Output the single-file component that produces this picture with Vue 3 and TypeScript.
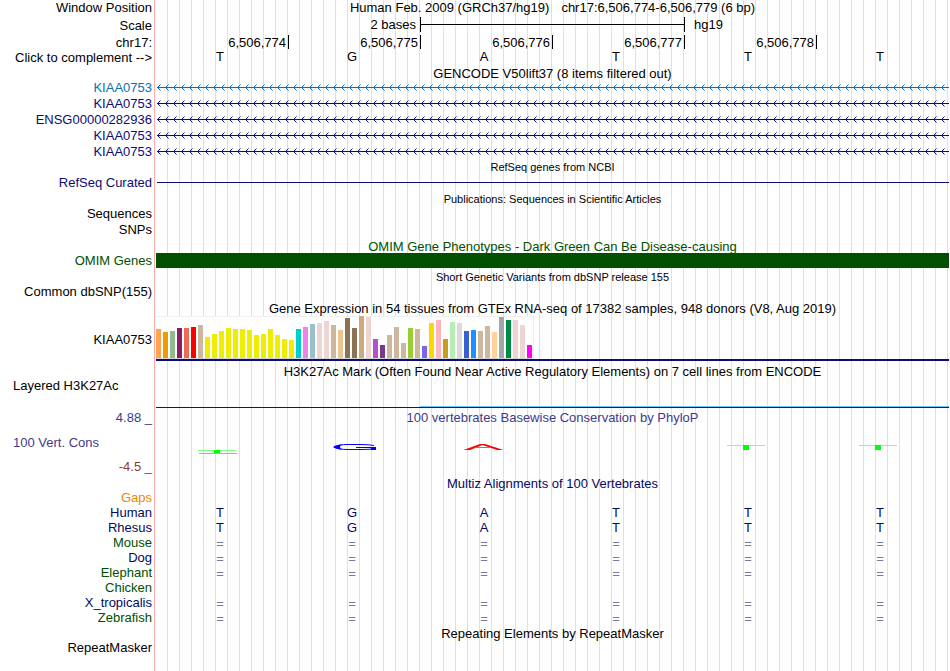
<script setup lang="ts">
import { computed, ref } from 'vue'

interface Bar { color: string; height: number }
interface Species { name: string; tone: string; marks: string }

const complemented = ref(false)
const pairs: Record<string, string> = { A: 'T', T: 'A', G: 'C', C: 'G' }
const sequence = ['T', 'G', 'A', 'T', 'T', 'T']
const bases = computed(() =>
  complemented.value ? sequence.map((b) => pairs[b]) : sequence,
)

const ticks = ['6,506,774', '6,506,775', '6,506,776', '6,506,777', '6,506,778', '']

const genes = [
  { name: 'KIAA0753', tone: 'blue' },
  { name: 'KIAA0753', tone: 'navy' },
  { name: 'ENSG00000282936', tone: 'navy' },
  { name: 'KIAA0753', tone: 'navy' },
  { name: 'KIAA0753', tone: 'navy' },
]

const expression: Bar[] = (
  'ffa54f:29 ee9a00:26 8fbc8f:27 8b1c62:30 ee6a50:30 ff0000:31 cdb79e:33 ' +
  'eeee00:21 eeee00:24 eeee00:27 eeee00:30 eeee00:29 eeee00:29 eeee00:28 ' +
  'eeee00:23 eeee00:24 eeee00:29 eeee00:23 eeee00:19 eeee00:18 00cdcd:29 ' +
  'ee82ee:31 9ac0cd:34 eed5d2:35 eed5d2:37 cdb79e:33 eec591:28 8b7355:40 ' +
  '8b7355:30 cdaa7d:42 eed5d2:41 b452cd:19 7a378b:13 cdb79e:23 cdb79e:31 ' +
  'cdb79e:15 9acd32:30 cdb79e:29 7a67ee:12 ffd700:35 ffb6c1:38 cd9b1d:19 ' +
  'b4eeb4:36 d9d9d9:35 3a5fcd:27 1e90ff:28 cdb79e:27 cdb79e:32 ffd39b:26 ' +
  'a6a6a6:41 008b45:38 eed5d2:38 eed5d2:33 ff00ff:13'
).split(' ').map((item) => {
  const [hex, height] = item.split(':')
  return { color: '#' + hex, height: Number(height) }
})

const species: Species[] = [
  { name: 'Gaps', tone: 'orange', marks: '' },
  { name: 'Human', tone: 'ink', marks: 'TGATTT' },
  { name: 'Rhesus', tone: 'ink', marks: 'TGATTT' },
  { name: 'Mouse', tone: 'green', marks: '======' },
  { name: 'Dog', tone: 'ink', marks: '======' },
  { name: 'Elephant', tone: 'green', marks: '======' },
  { name: 'Chicken', tone: 'green', marks: '' },
  { name: 'X_tropicalis', tone: 'ink', marks: '======' },
  { name: 'Zebrafish', tone: 'green', marks: '======' },
]
</script>

<template>
  <main class="browser">
    <div class="row">
      <div class="label">Window Position</div>
      <div class="title position">
        <span>Human Feb. 2009 (GRCh37/hg19)</span>
        <span>chr17:6,506,774-6,506,779 (6 bp)</span>
      </div>
    </div>

    <div class="row ruler">
      <div class="label">Scale</div>
      <div class="scale">
        <span class="scale-size">2 bases</span>
        <span class="scale-bar"></span>
        <span class="scale-db">hg19</span>
      </div>
    </div>

    <div class="row ruler">
      <div class="label">chr17:</div>
      <div class="cells ticks">
        <span v-for="(tick, i) in ticks" :key="i">{{ tick }}</span>
      </div>
    </div>

    <div class="row short">
      <button class="label" type="button" @click="complemented = !complemented">Click to complement --&gt;</button>
      <div class="cells bases sequence">
        <span v-for="(base, i) in bases" :key="i">{{ base }}</span>
      </div>
    </div>

    <div class="row short">
      <h2 class="title">GENCODE V50lift37 (8 items filtered out)</h2>
    </div>
    <div v-for="(gene, i) in genes" :key="i" class="row" :class="gene.tone">
      <div class="label">{{ gene.name }}</div>
      <svg class="gene" height="16" shape-rendering="crispEdges" aria-hidden="true">
        <defs>
          <pattern :id="'arrow-' + i" x="1" width="8" height="16" patternUnits="userSpaceOnUse">
            <path fill="currentColor" d="M0 7h8v1H0zM1 6h1v3H1zM2 5h1v1H2zM2 9h1v1H2z" />
            <path fill="currentColor" opacity="0.5" d="M3 4h1v1H3zM3 10h1v1H3z" />
          </pattern>
        </defs>
        <rect x="1" width="100%" height="16" :fill="'url(#arrow-' + i + ')'" />
      </svg>
    </div>

    <div class="row tight">
      <h2 class="title small">RefSeq genes from NCBI</h2>
    </div>
    <div class="row short tight navy">
      <div class="label">RefSeq Curated</div>
      <div class="refseq"></div>
    </div>

    <div class="row short">
      <h2 class="title small">Publications: Sequences in Scientific Articles</h2>
    </div>
    <div class="row"><div class="label">Sequences</div></div>
    <div class="row"><div class="label">SNPs</div></div>

    <div class="row short green">
      <h2 class="title">OMIM Gene Phenotypes - Dark Green Can Be Disease-causing</h2>
    </div>
    <div class="row short green">
      <div class="label">OMIM Genes</div>
      <div class="omim"></div>
    </div>

    <div class="row">
      <h2 class="title small">Short Genetic Variants from dbSNP release 155</h2>
    </div>
    <div class="row"><div class="label">Common dbSNP(155)</div></div>

    <div class="row">
      <h2 class="title">Gene Expression in 54 tissues from GTEx RNA-seq of 17382 samples, 948 donors (V8, Aug 2019)</h2>
    </div>
    <div class="row gtex">
      <div class="label">KIAA0753</div>
      <div class="expression">
        <div class="bars">
          <i
            v-for="(bar, i) in expression"
            :key="i"
            :style="{ height: bar.height + 'px', background: bar.color }"
          ></i>
        </div>
      </div>
    </div>

    <div class="row short tight">
      <h2 class="title">H3K27Ac Mark (Often Found Near Active Regulatory Elements) on 7 cell lines from ENCODE</h2>
    </div>
    <div class="row layered">
      <div class="label left">Layered H3K27Ac</div>
      <div class="signal"><span></span></div>
    </div>

    <div class="row conservation">
      <div class="limits">
        <span class="violet">4.88 _</span>
        <span class="violet left">100 Vert. Cons</span>
        <span class="maroon">-4.5 _</span>
      </div>
      <div>
        <h2 class="title violet">100 vertebrates Basewise Conservation by PhyloP</h2>
        <div class="cells logo" aria-hidden="true">
          <svg viewBox="0 0 132 20">
            <path d="M42 10.5h38" stroke="#80ff80" />
            <path d="M43 13.5h38" stroke="#ff8c8c" />
            <path d="M58 10h6v3h-6z" fill="#00ff00" />
          </svg>
          <svg viewBox="0 0 132 20">
            <path d="M86 5.5Q81 4.500 72 4.500H60Q50 4.500 46 7Q50 9.500 60 9.500H74Q82 9.500 87 8.500" fill="none" stroke="#0000ff" />
            <path d="M45 7Q48 5 54 4.500Q50 7 54 9.500Q48 9 45 7M83 7h5v3h-4l-4-1h3z" fill="#0000ff" />
            <path d="M68 7.500h16" stroke="#0000ff" />
          </svg>
          <svg viewBox="0 0 132 20">
            <path d="M43.500 10L60 4h5L83.500 10H77L62.500 5 50 10z" fill="#ff0000" />
            <path d="M55 7.500h16" stroke="#ff5050" />
          </svg>
          <span></span>
          <svg v-for="n in 2" :key="n" viewBox="0 0 132 20">
            <path d="M43 5.500h38" stroke="#80ff80" />
            <path d="M59 5h6v5h-6z" fill="#00ff00" />
          </svg>
        </div>
      </div>
    </div>

    <div class="row short ink">
      <h2 class="title">Multiz Alignments of 100 Vertebrates</h2>
    </div>
    <div v-for="item in species" :key="item.name" class="row short" :class="item.tone">
      <div class="label">{{ item.name }}</div>
      <div class="cells bases ink">
        <span v-for="(mark, i) in item.marks" :key="i" :class="{ faint: mark === '=' }">{{ mark }}</span>
      </div>
    </div>

    <div class="row short">
      <h2 class="title">Repeating Elements by RepeatMasker</h2>
    </div>
    <div class="row short"><div class="label">RepeatMasker</div></div>
  </main>
</template>

<style>
body {
  margin: 0;
  background: #fff;
}
</style>

<style scoped>
.browser {
  box-sizing: border-box;
  min-height: 100vh;
  padding-right: 1px;
  color: #000;
  font-family: "Liberation Sans", Arial, sans-serif;
  font-size: 13px;
  line-height: 16px;
  white-space: nowrap;
  background:
    linear-gradient(#ffaaaa, #ffaaaa) 154px 0 / 1px 100% no-repeat,
    linear-gradient(#fff, #fff) 0 0 / 156px 100% no-repeat,
    linear-gradient(to right, #dcdcff 1px, transparent 1px) 167px 0 / 12px 100% repeat-x;
}
.row {
  display: grid;
  grid-template-columns: 152px minmax(0, 1fr);
  grid-template-rows: 100%;
  column-gap: 4px;
  height: 16px;
}
.row.short {
  height: 15px;
  line-height: 15px;
}
.row.tight {
  line-height: 13px;
}
.row.ruler {
  height: 17px;
  line-height: 17px;
}
.row.ruler .label {
  line-height: 19px;
}
.label {
  grid-column: 1;
  text-align: right;
}
button.label {
  padding: 0;
  border: 0;
  background: none;
  color: inherit;
  font: inherit;
  cursor: pointer;
}
.title {
  grid-column: 2;
  margin: 0;
  padding-top: 1px;
  font-size: 13px;
  font-weight: normal;
  text-align: center;
}
.title.small {
  font-size: 11px;
}
.title.position {
  display: flex;
  justify-content: center;
  gap: 12px;
  padding-top: 0;
}
.cells,
.scale {
  display: grid;
  grid-template-columns: repeat(6, minmax(0, 1fr));
  padding-right: 1px;
}
.scale > span {
  grid-column: span 2;
}
.scale-size {
  padding-right: 4px;
  text-align: right;
}
.scale-bar {
  height: 15px;
  align-self: center;
  border-left: 1px solid #000;
  background: linear-gradient(#000, #000) 0 7px / 100% 1px no-repeat;
}
.scale-db {
  height: 15px;
  align-self: center;
  padding-left: 9px;
  border-left: 1px solid #000;
  line-height: 15px;
}
.ticks span {
  height: 14px;
  align-self: center;
  padding-right: 2px;
  text-align: right;
  line-height: 15px;
}
.ticks span + span {
  border-left: 1px solid #000;
}
.bases span {
  padding-right: 4px;
  text-align: center;
}
.bases.sequence {
  line-height: 13px;
}
.gene {
  display: block;
  width: 100%;
}
.refseq {
  height: 1px;
  margin: 6px 0 0 1px;
  background: #0c0c78;
}
.omim {
  background: #005000;
}
.row.gtex {
  height: 45px;
  padding-bottom: 3px;
  line-height: 47px;
}
.expression {
  border-bottom: 2px solid #0c0c78;
}
.bars {
  box-sizing: border-box;
  display: flex;
  align-items: flex-end;
  gap: 2px;
  width: max-content;
  height: 43px;
  padding-right: 1px;
  border-right: 1px solid #f0f0f0;
  border-bottom: 1px solid #d3d3d3;
  background: linear-gradient(#f0f0f0, #f0f0f0) 0 0 / 100% 1px no-repeat #fff;
}
.bars i {
  width: 5px;
}
.row.layered {
  height: 31px;
  line-height: 13px;
}
.left {
  padding-left: 13px;
  text-align: left;
}
.signal {
  display: flex;
  justify-content: flex-end;
  align-items: flex-end;
  height: 28px;
  border-bottom: 1px solid #28142d;
}
.signal span {
  width: 66.667%;
  height: 1px;
  background: #66c8ff;
}
.row.conservation {
  height: 65px;
  line-height: 15px;
}
.conservation .title {
  padding-top: 0;
}
.limits {
  display: flex;
  flex-direction: column;
  justify-content: space-between;
  height: 64px;
  text-align: right;
}
.limits .left {
  text-align: left;
}
.logo {
  padding-top: 15px;
}
.logo svg {
  display: block;
  width: 132px;
  height: 20px;
}
.blue {
  color: #0c70b0;
}
.navy {
  color: #0c0c78;
}
.ink {
  color: #000a64;
}
.green {
  color: #005000;
}
.orange {
  color: #e68a00;
}
.violet {
  color: #3c3c8c;
}
.maroon {
  color: #8c3c3c;
}
.bases .faint {
  padding-top: 1px;
  color: #7878aa;
}
</style>
